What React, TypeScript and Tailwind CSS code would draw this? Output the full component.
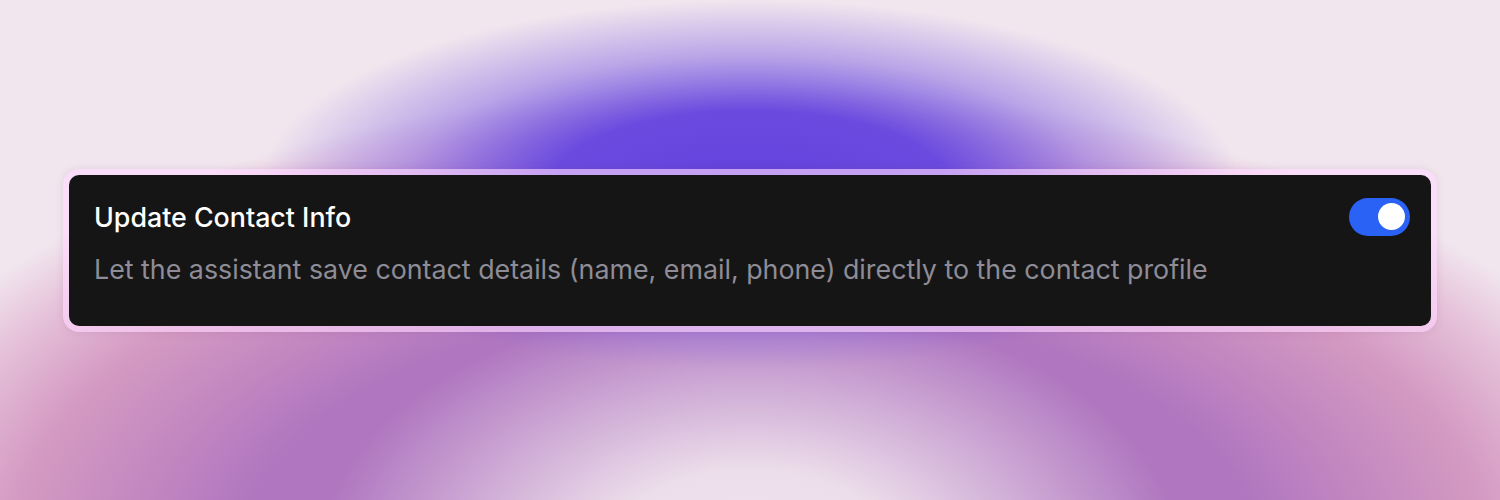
import { useState } from 'react';

function Toggle({ on, onChange }: { on: boolean; onChange: (v: boolean) => void }) {
  return (
    <button
      type="button"
      role="switch"
      aria-checked={on}
      onClick={() => onChange(!on)}
      className={
        on
          ? 'relative flex h-[38px] w-[61px] shrink-0 items-center rounded-full bg-[#2a62f6] px-[5px] justify-end'
          : 'relative flex h-[38px] w-[61px] shrink-0 items-center rounded-full bg-[#3a3a3f] px-[5px] justify-start'
      }
    >
      <span className="block h-[27px] w-[27px] rounded-full bg-white" />
    </button>
  );
}

export default function App() {
  const [enabled, setEnabled] = useState(true);

  return (
    <div
      className="relative flex h-[500px] w-full items-center justify-center overflow-hidden bg-[#f1e6ee]"
      style={{ fontFamily: 'Inter, "Noto Sans", sans-serif' }}
    >
      {/* background glow: purple/pink mound, light hole, violet crown */}
      <div className="pointer-events-none absolute inset-0 bg-[radial-gradient(ellipse_950px_480px_at_50%_560px,#b077c0_0%,#b077c0_54%,#c488c0_66%,#d49ac2_78%,rgba(222,170,205,0.6)_90%,transparent_99%)]" />
      <div className="pointer-events-none absolute inset-0 bg-[radial-gradient(ellipse_430px_260px_at_50%_560px,#f1e6ee_0%,rgba(241,230,238,0.92)_35%,transparent_100%)]" />
      <div className="pointer-events-none absolute inset-0 bg-[radial-gradient(ellipse_490px_185px_at_50%_185px,#6242dc_0%,#6a4adf_40%,rgba(130,100,225,0.5)_70%,transparent_100%)]" />

      <div className="relative w-[1374px] rounded-[16px] bg-[rgba(255,215,255,0.62)] p-[6px] shadow-[0_0_8px_rgba(120,60,120,0.12)]">
        <div className="h-[151px] rounded-[10px] bg-[#151515] pl-[25px] pr-[21px] pt-[23px]">
          <div className="flex items-center justify-between">
            <h2 className="text-[26.8px] font-medium leading-[38px] text-white">Update Contact Info</h2>
            <Toggle on={enabled} onChange={setEnabled} />
          </div>
          <p className="mt-[15px] text-[26.8px] leading-[36px] text-[#8e8c96]">
            Let the assistant save contact details (name, email, phone) directly to the contact profile
          </p>
        </div>
      </div>
    </div>
  );
}
